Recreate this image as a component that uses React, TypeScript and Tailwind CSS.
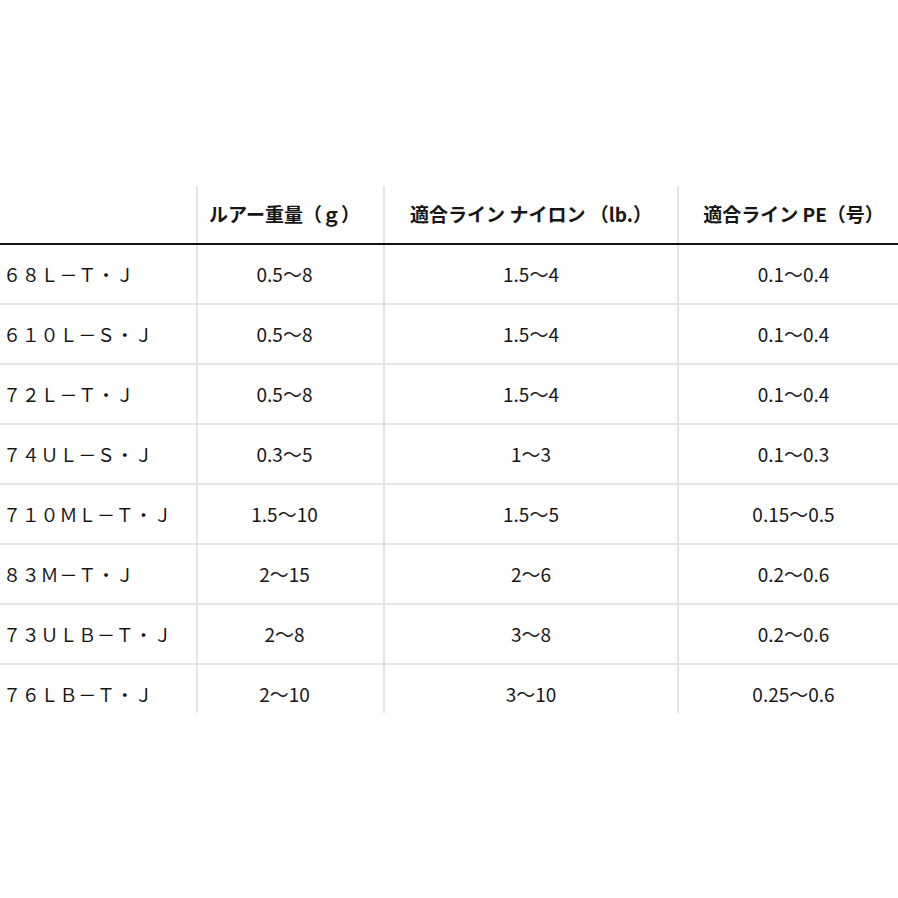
const ROWS: [string, string, string, string][] = [
  ['６８Ｌ－Ｔ・Ｊ', '0.5～8', '1.5～4', '0.1～0.4'],
  ['６１０Ｌ－Ｓ・Ｊ', '0.5～8', '1.5～4', '0.1～0.4'],
  ['７２Ｌ－Ｔ・Ｊ', '0.5～8', '1.5～4', '0.1～0.4'],
  ['７４ＵＬ－Ｓ・Ｊ', '0.3～5', '1～3', '0.1～0.3'],
  ['７１０ＭＬ－Ｔ・Ｊ', '1.5～10', '1.5～5', '0.15～0.5'],
  ['８３Ｍ－Ｔ・Ｊ', '2～15', '2～6', '0.2～0.6'],
  ['７３ＵＬＢ－Ｔ・Ｊ', '2～8', '3～8', '0.2～0.6'],
  ['７６ＬＢ－Ｔ・Ｊ', '2～10', '3～10', '0.25～0.6'],
]

const GRID = 'grid grid-cols-[198px_187px_294px_219px]'

export default function App() {
  return (
    <div
      className="w-[898px] h-[898px] bg-white text-[#161616] pt-[186px]"
      style={{ fontFamily: '"Noto Sans CJK JP", "Noto Sans", sans-serif' }}
    >
      {/* Header */}
      <div className={`${GRID} h-[59px] border-b-2 border-[#111] text-[19px] font-bold`}>
        <div className="border-r-2 border-[#e4e4e4]" />
        <div className="border-r-2 border-[#e4e4e4] flex items-center justify-center pr-[12px]">
          ルアー重量（ｇ）
        </div>
        <div className="border-r-2 border-[#e4e4e4] flex items-center justify-center">
          適合ライン ナイロン （lb.）
        </div>
        <div className="flex items-center justify-center pl-[10px]">適合ライン PE（号）</div>
      </div>

      {/* Rows */}
      {ROWS.map((r, i) => {
        const last = i === ROWS.length - 1
        return (
          <div
            key={i}
            className={`${GRID} ${last ? 'h-[48px]' : 'h-[60px] border-b-2 border-[#e4e4e4]'} overflow-hidden`}
          >
            <div className="border-r-2 border-[#e4e4e4]">
              <div className="h-[59px] flex items-center pl-[3px] text-[18px] tracking-[0.8px]">{r[0]}</div>
            </div>
            <div className="border-r-2 border-[#e4e4e4]">
              <div className="h-[59px] flex items-center justify-center pr-[12px] text-[19px]">{r[1]}</div>
            </div>
            <div className="border-r-2 border-[#e4e4e4]">
              <div className="h-[59px] flex items-center justify-center text-[19px]">{r[2]}</div>
            </div>
            <div>
              <div className="h-[59px] flex items-center justify-center pl-[10px] text-[19px]">{r[3]}</div>
            </div>
          </div>
        )
      })}
    </div>
  )
}
